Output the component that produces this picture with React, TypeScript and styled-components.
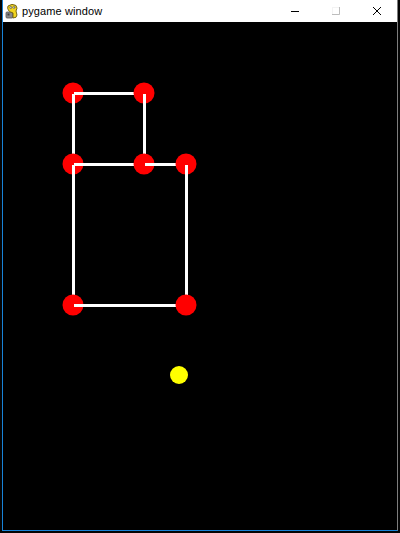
import React from "react";
import styled, { createGlobalStyle } from "styled-components";

const Global = createGlobalStyle`
  html, body {
    margin: 0;
    padding: 0;
    width: 400px;
    height: 533px;
    overflow: hidden;
    background: #050505;
  }
  #root { width: 400px; height: 533px; }
`;

const Page = styled.div`
  width: 400px;
  height: 533px;
  display: flex;
  padding-left: 2px;
  box-sizing: border-box;
`;

const Window = styled.div`
  width: 396px;
  height: 531px;
  display: flex;
  flex-direction: column;
  box-sizing: border-box;
  border-left: 1px solid #1883d7;
  border-bottom: 1px solid #1883d7;
  border-right: 1px solid #7d7d7d;
`;

const TitleBar = styled.div`
  height: 22px;
  flex: none;
  background: #ffffff;
  display: flex;
  align-items: center;
  padding-left: 1px;
`;

const AppIcon = styled.svg`
  width: 16px;
  height: 16px;
  flex: none;
  margin-right: 2px;
`;

const Title = styled.span`
  font-family: "Liberation Sans", Arial, sans-serif;
  font-size: 11px;
  letter-spacing: 0.1px;
  color: #000;
  flex: 1;
  line-height: 22px;
  margin-top: -1px;
`;

const CtrlButton = styled.div`
  width: 41px;
  height: 22px;
  display: flex;
  align-items: center;
  justify-content: center;
  flex: none;
`;

const Canvas = styled.div`
  flex: 1;
  background: #000;
  display: flex;
`;

const Scene = styled.svg`
  width: 394px;
  height: 508px;
  display: block;
`;

type P = [number, number];
const N: Record<string, P> = {
  A: [73, 93],
  B: [144, 93],
  C: [73, 164],
  D: [144, 164],
  E: [186, 164],
  F: [73, 305],
  G: [186, 305],
};
const edges: Record<string, string[]> = {
  A: ["B", "C"],
  B: ["D"],
  C: ["D", "F"],
  D: ["E"],
  E: ["G"],
  F: ["G"],
  G: [],
};

export default function App() {
  return (
    <>
      <Global />
      <Page>
        <Window>
          <TitleBar>
            <AppIcon viewBox="0 0 16 16">
              <rect x="2" y="9" width="7" height="6" rx="1" fill="#8a8a8a" stroke="#555" strokeWidth="0.8" />
              <rect x="3.5" y="10.5" width="2" height="2" fill="#444" />
              <path d="M4 3 Q8 0 12 2.5 Q14 5 12 8 L13 12 Q13 15 9 15 L9 10 Q6 9 4.5 7.5 Q3 5 4 3 Z" fill="#f2d620" stroke="#6b5b10" strokeWidth="0.9" />
              <circle cx="6.8" cy="4.5" r="1.1" fill="#fff" stroke="#333" strokeWidth="0.5" />
              <circle cx="10" cy="4.3" r="1.1" fill="#fff" stroke="#333" strokeWidth="0.5" />
              <circle cx="7" cy="4.6" r="0.45" fill="#000" />
              <circle cx="10.2" cy="4.4" r="0.45" fill="#000" />
            </AppIcon>
            <Title>pygame window</Title>
            <CtrlButton>
              <svg width="10" height="10" viewBox="0 0 10 10">
                <line x1="1" y1="5.5" x2="9" y2="5.5" stroke="#000" strokeWidth="1" />
              </svg>
            </CtrlButton>
            <CtrlButton>
              <svg width="10" height="10" viewBox="0 0 10 10">
                <rect x="1.5" y="1.5" width="7" height="7" fill="none" stroke="#f3f3f3" strokeWidth="1" />
                <path d="M8.5 1 V8.5 H1" fill="none" stroke="#bdbdbd" strokeWidth="1" />
              </svg>
            </CtrlButton>
            <CtrlButton>
              <svg width="10" height="10" viewBox="0 0 10 10">
                <path d="M1 1 L9 9 M9 1 L1 9" stroke="#000" strokeWidth="1" />
              </svg>
            </CtrlButton>
          </TitleBar>
          <Canvas>
            <Scene viewBox="3 22 394 508" shapeRendering="crispEdges">
              {Object.keys(N).map((k) => (
                <g key={k}>
                  <circle cx={N[k][0]} cy={N[k][1]} r={10.5} fill="#ff0000" shapeRendering="auto" />
                  {edges[k].map((t) => (
                    <line
                      key={t}
                      x1={N[k][0] + 0.5}
                      y1={N[k][1] + 0.5}
                      x2={N[t][0] + 0.5}
                      y2={N[t][1] + 0.5}
                      stroke="#ffffff"
                      strokeWidth={3}
                    />
                  ))}
                </g>
              ))}
              <circle cx={179} cy={375} r={9} fill="#ffff00" shapeRendering="auto" />
            </Scene>
          </Canvas>
        </Window>
      </Page>
    </>
  );
}
